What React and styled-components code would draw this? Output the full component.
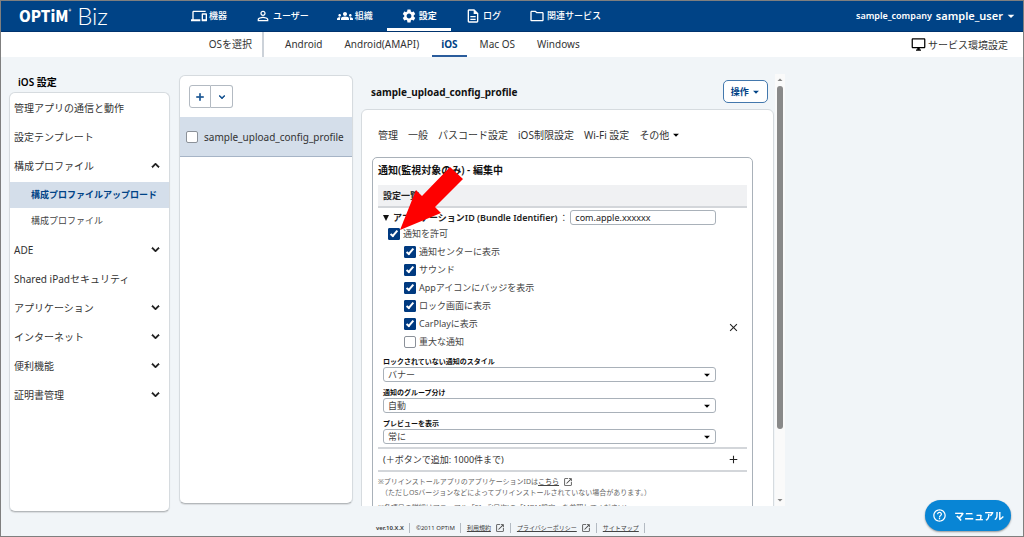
import React from "react";
import styled, { createGlobalStyle } from "styled-components";
import {
  MdAdd,
  MdArrowDropDown,
  MdArrowDropUp,
  MdClose,
  MdDevices,
  MdExpandLess,
  MdExpandMore,
  MdGroups,
  MdHelpOutline,
  MdOpenInNew,
  MdOutlineDescription,
  MdOutlineDesktopWindows,
  MdOutlineFolder,
  MdPersonOutline,
  MdSettings,
} from "react-icons/md";

const GlobalStyle = createGlobalStyle`
  *, *::before, *::after { box-sizing: border-box; }
  body {
    margin: 0;
    background: #f1f5f8;
    color: #333;
    font-family: "Noto Sans", "Noto Sans CJK JP", sans-serif;
    font-size: 10px;
    line-height: 14px;
  }
  button, input, select { font: inherit; color: inherit; margin: 0; }
  ul, h1, h2, h3, p { margin: 0; padding: 0; list-style: none; font-size: inherit; }
  a { color: inherit; text-decoration: none; }
  svg { flex: none; display: block; }
`;

const Page = styled.div`
  display: flex;
  flex-direction: column;
  height: 100vh;
  border: 1px solid #7f7f7f;
`;

const Header = styled.header`
  display: flex;
  flex: none;
  height: 31px;
  padding: 0 4px 0 18px;
  background: #004386;
  border-bottom: 1px solid #00336e;
  color: #fff;
`;

const Logo = styled.a`
  display: flex;
  align-items: center;
  width: 158px;
  gap: 6px;
  line-height: 30px;
`;

const LogoMark = styled.span`
  display: flex;
  font-family: "Noto Sans CJK JP", sans-serif;
  font-weight: 900;
  font-size: 15px;
`;

const LogoRegistered = styled.sup`
  font-size: 5px;
  line-height: 20px;
`;

const LogoProduct = styled.span`
  font-family: Lato, sans-serif;
  font-weight: 300;
  font-size: 24px;
`;

const GlobalNav = styled.nav`
  display: flex;
  flex: 1;
`;

const GlobalLink = styled.a`
  display: flex;
  align-items: center;
  gap: 2px;
  padding: 0 14px;
  font-size: 9px;
  font-weight: ${(p) => (p.$active ? 700 : 500)};
  box-shadow: ${(p) => (p.$active ? "inset 0 -3px #fff" : "none")};
`;

const Account = styled.div`
  display: flex;
  align-items: center;
  gap: 4px;
  font-size: 9px;
  font-weight: 600;
`;

const UserButton = styled.button`
  display: flex;
  align-items: center;
  padding: 0;
  border: 0;
  background: none;
  font-size: 11px;
  font-weight: 600;
`;

const SubHeader = styled.div`
  display: flex;
  flex: none;
  height: 25px;
  padding-right: 15px;
  background: #fff;
`;

const OsLabel = styled.span`
  width: 263px;
  padding-right: 10px;
  border-right: 2px solid #ccd2d9;
  line-height: 25px;
  text-align: right;
`;

const OsNav = styled.nav`
  display: flex;
  flex: 1;
  gap: 4px;
  padding-left: 12px;
`;

const OsLink = styled.a`
  padding: 0 9px;
  line-height: 25px;
  color: ${(p) => (p.$active ? "#004386" : "#333")};
  font-weight: ${(p) => (p.$active ? 700 : 400)};
  border-bottom: 2px solid ${(p) => (p.$active ? "#2a5c9c" : "transparent")};
`;

const ServiceLink = styled.a`
  display: flex;
  align-items: center;
  gap: 2px;
`;

const Body = styled.div`
  display: flex;
  flex: 1;
  min-height: 0;
  padding-left: 8px;
`;

const Sidebar = styled.aside`
  display: flex;
  flex-direction: column;
  width: 161px;
  padding: 18px 0 24px;
`;

const SidebarTitle = styled.h2`
  padding: 0 9px 3px;
  color: #000;
  font-weight: 600;
`;

const Card = styled.div`
  flex: 1;
  min-height: 0;
  background: #fff;
  border: 1px solid #d6dbdf;
  border-bottom-color: #b4b8bb;
  border-radius: 6px;
  box-shadow: 0 1px 1px rgba(0, 0, 0, 0.1);
`;

const MenuItem = styled.a`
  display: flex;
  align-items: center;
  justify-content: space-between;
  height: 29px;
  padding: 0 6px 0 4px;
  > svg { color: #111; }
  path:not([fill="none"]) { stroke: currentColor; stroke-width: 1; }
`;

const SubMenu = styled.ul`
  padding: 2px 0 1px;
`;

const SubItem = styled.a`
  display: block;
  height: 26px;
  padding-left: 21px;
  font-size: 9px;
  line-height: 25px;
  color: ${(p) => (p.$active ? "#004386" : "#444")};
  font-weight: ${(p) => (p.$active ? 700 : 400)};
  background: ${(p) => (p.$active ? "#d4deea" : "transparent")};
`;

const ListColumn = styled.section`
  display: flex;
  flex-direction: column;
  width: 174px;
  margin-left: 9px;
  padding: 18px 0 32px;
`;

const ListToolbar = styled.div`
  display: flex;
  padding: 9px;
`;

const ToolButton = styled.button`
  display: flex;
  align-items: center;
  justify-content: center;
  width: 22px;
  height: 23px;
  padding: 0;
  border: 1px solid #b3bac2;
  background: #fff;
  color: #004386;
  path:not([fill="none"]) { stroke: currentColor; stroke-width: 1; }
  &:first-child { border-radius: 3px 0 0 3px; }
  &:last-child { border-radius: 0 3px 3px 0; border-left: 0; }
`;

const ProfileRow = styled.label`
  display: flex;
  align-items: center;
  gap: 6px;
  height: 40px;
  padding-left: 6px;
  background: #d4deea;
  border-bottom: 1px solid #a6b4c6;
  white-space: nowrap;
`;

const Tick = styled.input.attrs({ type: "checkbox" })`
  appearance: none;
  display: grid;
  place-items: center;
  flex: none;
  width: 12px;
  height: 12px;
  border: 1px solid #8b9199;
  border-radius: 2px;
  background: #fff;
  &:checked {
    border-color: #003a80;
    border-radius: 1px;
    background: #003a80;
  }
  &:checked::after {
    content: "";
    width: 4px;
    height: 8px;
    margin-top: -2px;
    border: solid #fff;
    border-width: 0 2px 2px 0;
    transform: rotate(40deg);
  }
`;

const Main = styled.main`
  display: flex;
  flex: 1;
  flex-direction: column;
  min-width: 0;
  padding: 17px 0 0 8px;
`;

const Viewport = styled.div`
  display: flex;
  flex: 1;
  min-height: 0;
  width: 64%;
`;

const Detail = styled.div`
  flex: 1;
  min-width: 0;
  overflow: hidden;
  padding-right: 1px;
`;

const DetailHeader = styled.div`
  display: flex;
  align-items: center;
  justify-content: space-between;
  height: 35px;
  padding: 0 6px 0 10px;
  color: #111;
  font-weight: 600;
`;

const ActionButton = styled.button`
  display: flex;
  align-items: center;
  height: 23px;
  padding: 0 4px 0 7px;
  border: 1px solid #4378ad;
  border-radius: 5px;
  background: #fff;
  color: #004386;
  font-size: 9px;
  font-weight: 700;
`;

const Panel = styled.div`
  padding: 18px 20px 0 10px;
  background: #fff;
  border: 1px solid #d6dbdf;
  border-radius: 6px 6px 0 0;
`;

const Tabs = styled.nav`
  display: flex;
  gap: 10px;
  padding: 0 6px 15px;
  white-space: nowrap;
`;

const Tab = styled.a`
  display: flex;
  align-items: center;
`;

const Form = styled.form`
  position: relative;
  padding: 5px 5px 20px;
  border: 1px solid #a9b1b9;
  border-radius: 5px;
`;

const FormTitle = styled.h3`
  color: #111;
  font-weight: 600;
`;

const SectionTitle = styled.div`
  height: 23px;
  margin-top: 8px;
  padding-left: 5px;
  background: #f0f1f3;
  border-bottom: 2px solid #d3d6da;
  color: #222;
  font-size: 9px;
  font-weight: 600;
  line-height: 21px;
`;

const EntryRow = styled.div`
  display: flex;
  align-items: center;
  gap: 11px;
  padding: 2px 7px 3px 5px;
  border-bottom: 2px solid #d3d6da;
  color: #444;
  font-size: 9px;
`;

const EntryFields = styled.div`
  flex: 1;
  min-width: 0;
`;

const IconButton = styled.button`
  display: flex;
  padding: 0;
  border: 0;
  background: none;
  color: #222;
`;

const IdentifierRow = styled.label`
  display: flex;
  align-items: center;
  gap: 2px;
  color: #222;
  white-space: nowrap;
`;

const IdentifierName = styled.span`
  margin-left: 2px;
  font-weight: 600;
`;

const TextBox = styled.input`
  width: 146px;
  height: 15px;
  padding: 0 4px;
  border: 1px solid #a9b1b9;
  border-radius: 3px;
  background: #fff;
`;

const CheckRow = styled.label`
  display: flex;
  align-items: center;
  gap: 3px;
  height: 18px;
  padding-left: ${(p) => (p.$nested ? 21 : 5)}px;
`;

const SelectField = styled.label`
  display: flex;
  flex-direction: column;
  padding-top: 5px;
  color: #111;
  font-size: 7px;
  font-weight: 600;
  line-height: 11px;
`;

const SelectWrap = styled.span`
  display: grid;
  align-items: center;
  > * { grid-area: 1 / 1; }
  > svg { justify-self: end; margin-right: 2px; pointer-events: none; }
`;

const Select = styled.select`
  appearance: none;
  height: 15px;
  padding: 0 4px;
  border: 1px solid #a9b1b9;
  border-radius: 3px;
  background: #fff;
  color: #444;
  font-size: 9px;
  font-weight: 400;
  line-height: 12px;
`;

const AddRow = styled.div`
  display: flex;
  align-items: center;
  justify-content: space-between;
  height: 23px;
  padding: 0 7px 0 5px;
  border-bottom: 2px solid #d3d6da;
  font-size: 9px;
`;

const Notes = styled.div`
  padding-top: 4px;
  color: #666;
  font-size: 7px;
  line-height: 11px;
`;

const Note = styled.p`
  display: flex;
  align-items: center;
  padding-left: ${(p) => (p.$indent ? 3 : 0)}px;
  margin-top: ${(p) => (p.$spaced ? 4 : 0)}px;
  white-space: nowrap;
`;

const TextLink = styled.a`
  display: inline-flex;
  align-items: center;
  gap: 4px;
  color: #444;
  text-decoration: underline;
`;

const Pointer = styled.svg`
  position: absolute;
  top: 8px;
  left: 27px;
`;

const ScrollBar = styled.div`
  display: flex;
  flex-direction: column;
  align-items: center;
  width: 10px;
  background: #fafafa;
  color: #858585;
`;

const ScrollTrack = styled.div`
  flex: 1;
  width: 6px;
`;

const ScrollThumb = styled.div`
  height: 84%;
  border-radius: 3px;
  background: #898989;
`;

const Footer = styled.footer`
  display: flex;
  align-items: center;
  flex: none;
  height: 30px;
  padding: 14px 0 0 15px;
  color: #333;
  font-size: 6px;
  line-height: 10px;
`;

const FooterPart = styled.span`
  display: flex;
  align-items: center;
  padding-right: 5px;
  margin-right: 6px;
  border-right: 1px solid #b3bac2;
  font-weight: ${(p) => (p.$strong ? 600 : 400)};
`;

const ManualButton = styled.button`
  position: fixed;
  right: 13px;
  bottom: 6px;
  display: flex;
  align-items: center;
  gap: 7px;
  height: 31px;
  padding: 0 7px;
  border: 0;
  border-radius: 16px;
  background: #0885d5;
  box-shadow: 0 1px 2px rgba(0, 0, 0, 0.4);
  color: #fff;
  font-weight: 700;
`;

const globalLinks = [
  ["機器", MdDevices],
  ["ユーザー", MdPersonOutline],
  ["組織", MdGroups],
  ["設定", MdSettings],
  ["ログ", MdOutlineDescription],
  ["関連サービス", MdOutlineFolder],
];
const osLinks = ["Android", "Android(AMAPI)", "iOS", "Mac OS", "Windows"];
const menu = [
  { label: "管理アプリの通信と動作" },
  { label: "設定テンプレート" },
  { label: "構成プロファイル", children: ["構成プロファイルアップロード", "構成プロファイル"] },
  { label: "ADE", closed: true },
  { label: "Shared iPadセキュリティ" },
  { label: "アプリケーション", closed: true },
  { label: "インターネット", closed: true },
  { label: "便利機能", closed: true },
  { label: "証明書管理", closed: true },
];
const tabs = ["管理", "一般", "パスコード設定", "iOS制限設定", "Wi-Fi 設定"];
const permissions = [
  ["通知センターに表示", true],
  ["サウンド", true],
  ["Appアイコンにバッジを表示", true],
  ["ロック画面に表示", true],
  ["CarPlayに表示", true],
  ["重大な通知", false],
];
const selects = [
  ["ロックされていない通知のスタイル", "バナー"],
  ["通知のグループ分け", "自動"],
  ["プレビューを表示", "常に"],
];

export default function App() {
  return (
    <Page lang="ja">
      <GlobalStyle />
      <Header>
        <Logo href="#" aria-label="OPTiM Biz">
          <LogoMark>OPTiM<LogoRegistered>®</LogoRegistered></LogoMark>
          <LogoProduct>Biz</LogoProduct>
        </Logo>
        <GlobalNav>
          {globalLinks.map(([label, Icon]) => (
            <GlobalLink key={label} href="#" $active={label === "設定"}>
              <Icon size={16} />
              {label}
            </GlobalLink>
          ))}
        </GlobalNav>
        <Account>
          sample_company
          <UserButton type="button">
            sample_user
            <MdArrowDropDown size={16} />
          </UserButton>
        </Account>
      </Header>
      <SubHeader>
        <OsLabel>OSを選択</OsLabel>
        <OsNav>
          {osLinks.map((label) => (
            <OsLink key={label} href="#" $active={label === "iOS"}>{label}</OsLink>
          ))}
        </OsNav>
        <ServiceLink href="#">
          <MdOutlineDesktopWindows size={15} color="#000" />
          サービス環境設定
        </ServiceLink>
      </SubHeader>
      <Body>
        <Sidebar>
          <SidebarTitle>iOS 設定</SidebarTitle>
          <Card>
            <ul>
              {menu.map((item) => (
                <li key={item.label}>
                  <MenuItem href="#">
                    {item.label}
                    {item.children && <MdExpandLess size={15} />}
                    {item.closed && <MdExpandMore size={15} />}
                  </MenuItem>
                  {item.children && (
                    <SubMenu>
                      {item.children.map((label, i) => (
                        <li key={label}><SubItem href="#" $active={i === 0}>{label}</SubItem></li>
                      ))}
                    </SubMenu>
                  )}
                </li>
              ))}
            </ul>
          </Card>
        </Sidebar>
        <ListColumn>
          <Card>
            <ListToolbar>
              <ToolButton type="button" aria-label="追加"><MdAdd size={12} /></ToolButton>
              <ToolButton type="button" aria-label="メニュー"><MdExpandMore size={12} /></ToolButton>
            </ListToolbar>
            <ProfileRow><Tick />sample_upload_config_profile</ProfileRow>
          </Card>
        </ListColumn>
        <Main>
          <Viewport>
            <Detail>
              <DetailHeader>
                <h1>sample_upload_config_profile</h1>
                <ActionButton type="button">操作<MdArrowDropDown size={14} /></ActionButton>
              </DetailHeader>
              <Panel>
                <Tabs>
                  {tabs.map((label) => <Tab key={label} href="#">{label}</Tab>)}
                  <Tab href="#">その他<MdArrowDropDown size={14} color="#000" /></Tab>
                </Tabs>
                <Form>
                  <FormTitle>通知(監視対象のみ) - 編集中</FormTitle>
                  <SectionTitle>設定一覧</SectionTitle>
                  <EntryRow>
                    <EntryFields>
                      <IdentifierRow>
                        <svg width="6" height="6" viewBox="0 0 6 6"><path d="M0 0h6L3 6z" fill="#111" /></svg>
                        <IdentifierName>アプリケーションID (Bundle Identifier)</IdentifierName>：
                        <TextBox type="text" defaultValue="com.apple.xxxxxx" />
                      </IdentifierRow>
                      <CheckRow><Tick defaultChecked />通知を許可</CheckRow>
                      {permissions.map(([label, on]) => (
                        <CheckRow key={label} $nested><Tick defaultChecked={on} />{label}</CheckRow>
                      ))}
                      {selects.map(([label, value]) => (
                        <SelectField key={label}>
                          {label}
                          <SelectWrap>
                            <Select defaultValue={value}><option>{value}</option></Select>
                            <MdArrowDropDown size={14} color="#000" />
                          </SelectWrap>
                        </SelectField>
                      ))}
                    </EntryFields>
                    <IconButton type="button" aria-label="削除"><MdClose size={13} /></IconButton>
                  </EntryRow>
                  <AddRow>
                    (＋ボタンで追加: 1000件まで)
                    <IconButton type="button" aria-label="追加"><MdAdd size={13} /></IconButton>
                  </AddRow>
                  <Notes>
                    <Note>
                      ※プリインストールアプリのアプリケーションIDは
                      <TextLink href="#">こちら <MdOpenInNew size={10} /></TextLink>
                    </Note>
                    <Note $indent>（ただしOSバージョンなどによってプリインストールされていない場合があります。）</Note>
                    <Note $spaced>※各項目の詳細はマニュアル「F1.『(目次)の「MDM設定」を参照してください)</Note>
                  </Notes>
                  <Pointer width="64" height="65" viewBox="0 0 64 65" aria-hidden="true">
                    <path d="M0 64 16 24 22 30 50 1 63 13 35 41 41 47z" fill="#fe0000" />
                  </Pointer>
                </Form>
              </Panel>
            </Detail>
            <ScrollBar aria-hidden="true">
              <MdArrowDropUp size={12} />
              <ScrollTrack><ScrollThumb /></ScrollTrack>
              <MdArrowDropDown size={12} />
            </ScrollBar>
          </Viewport>
          <Footer>
            <FooterPart $strong>ver.10.X.X</FooterPart>
            <FooterPart>©2011 OPTiM</FooterPart>
            <FooterPart><TextLink href="#">利用規約 <MdOpenInNew size={10} /></TextLink></FooterPart>
            <FooterPart><TextLink href="#">プライバシーポリシー <MdOpenInNew size={10} /></TextLink></FooterPart>
            <FooterPart><TextLink href="#">サイトマップ</TextLink></FooterPart>
          </Footer>
        </Main>
      </Body>
      <ManualButton type="button"><MdHelpOutline size={15} />マニュアル</ManualButton>
    </Page>
  );
}
